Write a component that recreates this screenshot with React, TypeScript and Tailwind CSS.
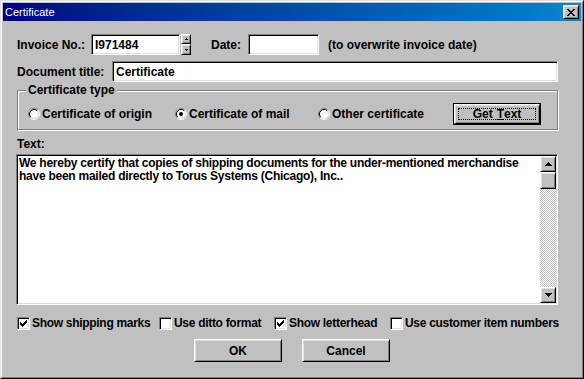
const sunken =
  'border border-t-[#808080] border-l-[#808080] border-b-white border-r-white shadow-[inset_1px_1px_0_#000,inset_-1px_-1px_0_#dfdfdf]';
const raised =
  'border border-t-white border-l-white border-b-black border-r-black shadow-[inset_1px_1px_0_#dfdfdf,inset_-1px_-1px_0_#808080]';

const CHECK = ['......X', '.....XX', 'X...XXX', 'XX.XXX.', 'XXXXX..', '.XXX...', '..X....'];
const CLOSE_X = ['XX....XX', '.XX..XX.', '..XXXX..', '...XX...', '..XXXX..', '.XX..XX.', 'XX....XX'];

function Pixels({ rows, w, h }: { rows: string[]; w: number; h: number }) {
  return (
    <svg width={w} height={h} viewBox={`0 0 ${w} ${h}`} shapeRendering="crispEdges">
      {rows.flatMap((row, y) =>
        row.split('').map((c, x) => (c === 'X' ? <rect key={`${x}-${y}`} x={x} y={y} width={1} height={1} fill="#000" /> : null))
      )}
    </svg>
  );
}

function Radio({ checked }: { checked?: boolean }) {
  return (
    <svg width={12} height={12} viewBox="0 0 12 12" className="shrink-0">
      <circle cx={6} cy={6} r={4.5} fill="#fff" />
      <path d="M2.11 9.89A5.5 5.5 0 0 1 9.89 2.11" stroke="#808080" fill="none" />
      <path d="M9.89 2.11A5.5 5.5 0 0 1 2.11 9.89" stroke="#fff" fill="none" />
      <path d="M2.82 9.18A4.5 4.5 0 0 1 9.18 2.82" stroke="#000" fill="none" />
      <path d="M9.18 2.82A4.5 4.5 0 0 1 2.82 9.18" stroke="#dfdfdf" fill="none" />
      {checked && <circle cx={6} cy={6} r={2} fill="#000" />}
    </svg>
  );
}

function Checkbox({ checked }: { checked?: boolean }) {
  return (
    <div className={`w-[13px] h-[13px] shrink-0 bg-white flex items-center justify-center ${sunken}`}>
      {checked && <Pixels rows={CHECK} w={7} h={7} />}
    </div>
  );
}

function Arrow({ down, size = 7 }: { down?: boolean; size?: number }) {
  const h = Math.ceil(size / 2);
  return (
    <svg width={size} height={h} viewBox={`0 0 ${size} ${h}`} shapeRendering="crispEdges">
      <polygon points={down ? `0,0 ${size},0 ${size / 2},${h}` : `${size / 2},0 ${size},${h} 0,${h}`} fill="#000" />
    </svg>
  );
}

function Button({ children, className = '' }: { children?: React.ReactNode; className?: string }) {
  return (
    <div className={`flex items-center justify-center bg-[#c0c0c0] ${raised} ${className}`}>{children}</div>
  );
}

export default function App() {
  return (
    <div className="w-[584px] h-[379px] overflow-hidden bg-[#c0c0c0] font-['Liberation_Sans',Arial,sans-serif] text-[12px] leading-[14px] font-bold text-black border border-t-[#dfdfdf] border-l-[#dfdfdf] border-b-black border-r-black">
      <div className="h-full flex flex-col border border-t-white border-l-white border-b-[#808080] border-r-[#808080] p-[1px]">
        {/* Title bar */}
        <div className="h-[18px] shrink-0 flex items-center justify-between pl-[2px] pr-[2px] bg-gradient-to-r from-[#000080] to-[#1084d0]">
          <span className="text-white font-normal text-[11px]">Certificate</span>
          <Button className="w-[16px] h-[14px]">
            <Pixels rows={CLOSE_X} w={8} h={7} />
          </Button>
        </div>

        <div className="flex-1 flex flex-col pl-[14px]">
          {/* Invoice row */}
          <div className="mt-[13px] h-[21px] flex items-center">
            <span className="w-[74px]">Invoice No.:</span>
            <div className={`w-[89px] h-[21px] bg-white flex items-center pl-[3px] ${sunken}`}>I971484</div>
            <div className="ml-[1px] w-[10px] h-[21px] flex flex-col">
              <Button className="h-[10px] w-[10px]">
                <Arrow size={3} />
              </Button>
              <Button className="h-[11px] w-[10px]">
                <Arrow size={3} down />
              </Button>
            </div>
            <span className="ml-[20px] w-[37px]">Date:</span>
            <div className={`w-[71px] h-[21px] bg-white ${sunken}`} />
            <span className="ml-[9px]">(to overwrite invoice date)</span>
          </div>

          {/* Document title */}
          <div className="mt-[6px] h-[21px] flex items-center">
            <span className="w-[95px]">Document title:</span>
            <div className={`w-[446px] h-[21px] bg-white flex items-center pl-[3px] ${sunken}`}>Certificate</div>
          </div>

          {/* Certificate type group */}
          <div className="mt-[8px] w-[541px] h-[40px] border border-[#808080] shadow-[1px_1px_0_#fff,inset_1px_1px_0_#fff] flex flex-col">
            <span className="-mt-[8px] ml-[8px] px-[2px] w-fit bg-[#c0c0c0]">Certificate type</span>
            <div className="mt-[6px] h-[22px] flex items-center pl-[10px]">
              <label className="w-[147px] flex items-center gap-[2px]">
                <Radio />
                <span>Certificate of origin</span>
              </label>
              <label className="w-[143px] flex items-center gap-[2px]">
                <Radio checked />
                <span>Certificate of mail</span>
              </label>
              <label className="w-[135px] flex items-center gap-[2px]">
                <Radio />
                <span>Other certificate</span>
              </label>
              <div className="w-[88px] h-[22px] border border-black flex">
                <Button className="flex-1 p-[3px]">
                  <span className="w-full h-full flex items-center justify-center border border-dotted border-black">
                    Get <span className="underline ml-[4px]">T</span>ext
                  </span>
                </Button>
              </div>
            </div>
          </div>

          {/* Text */}
          <span className="mt-[7px] h-[14px]">Text:</span>
          <div className={`mt-[3px] -ml-[1px] w-[542px] h-[151px] bg-white flex p-[1px] ${sunken}`}>
            <div className="flex-1 pl-[1px] pt-[1px] leading-[13px] tracking-[-0.25px]">
              We hereby certify that copies of shipping documents for the under-mentioned merchandise have been mailed
              directly to Torus Systems (Chicago), Inc..
            </div>
            <div className="w-[16px] flex flex-col">
              <Button className="h-[16px] shrink-0">
                <Arrow />
              </Button>
              <Button className="h-[17px] shrink-0" />
              <div className="flex-1 bg-[repeating-conic-gradient(#c0c0c0_0%_25%,#ffffff_0%_50%)] bg-[length:2px_2px]" />
              <Button className="h-[16px] shrink-0">
                <Arrow down />
              </Button>
            </div>
          </div>

          {/* Options */}
          <div className="mt-[11px] h-[14px] flex items-center tracking-[-0.3px]">
            <label className="w-[142px] flex items-center gap-[2px]">
              <Checkbox checked />
              <span>Show shipping marks</span>
            </label>
            <label className="w-[115px] flex items-center gap-[2px]">
              <Checkbox />
              <span>Use ditto format</span>
            </label>
            <label className="w-[116px] flex items-center gap-[2px]">
              <Checkbox checked />
              <span>Show letterhead</span>
            </label>
            <label className="flex items-center gap-[2px]">
              <Checkbox />
              <span>Use customer item numbers</span>
            </label>
          </div>

          {/* Buttons */}
          <div className="mt-[9px] flex justify-center gap-[20px] -ml-[14px]">
            <Button className="w-[88px] h-[23px]">OK</Button>
            <Button className="w-[88px] h-[23px]">Cancel</Button>
          </div>
        </div>
      </div>
    </div>
  );
}
